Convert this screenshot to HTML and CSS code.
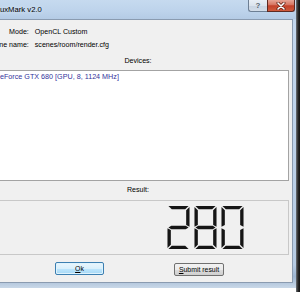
FILE: index.html
```html
<!DOCTYPE html>
<html>
<head>
<meta charset="utf-8">
<title>LuxMark v2.0</title>
<link rel="stylesheet" href="styles.css">
</head>
<body>
<div class="desk">
  <div class="window">
    <div class="titlebar">
      <span class="title">LuxMark v2.0</span>
      <div class="caption">
        <span class="cap help">?</span>
        <span class="cap close">
          <svg width="10" height="8" viewBox="0 0 10 8">
            <path d="M2 1 L8 7 M8 1 L2 7" stroke="#5a1d12" stroke-width="3" stroke-linecap="round"/>
            <path d="M2 1 L8 7 M8 1 L2 7" stroke="#ffffff" stroke-width="1.6" stroke-linecap="round"/>
          </svg>
        </span>
      </div>
    </div>
    <div class="client">
      <div class="form">
        <span class="lbl">Mode:</span><span class="val">OpenCL Custom</span>
        <span class="lbl">Scene name:</span><span class="val">scenes/room/render.cfg</span>
      </div>
      <div class="cap-lbl devices">Devices:</div>
      <div class="list">
        <div class="item">GeForce GTX 680 [GPU, 8, 1124 MHz]</div>
      </div>
      <div class="cap-lbl result">Result:</div>
      <div class="lcd">
        <svg class="digit" viewBox="0 0 24 46" aria-label="2">
          <polygon points="1.5,0.5 22.5,0.5 19,4 5,4"/>
          <polygon points="23.5,1.5 23.5,22.3 20,20.5 20,5"/>
          <polygon points="1.5,23 4.5,21.3 19.5,21.3 22.5,23 19.5,24.7 4.5,24.7"/>
          <polygon points="0.5,23.7 4,25.5 4,41 0.5,44.5"/>
          <polygon points="1.5,45.5 5,42 19,42 22.5,45.5"/>
        </svg>
        <svg class="digit" viewBox="0 0 24 46" aria-label="8">
          <polygon points="1.5,0.5 22.5,0.5 19,4 5,4"/>
          <polygon points="0.5,1.5 4,5 4,20.5 0.5,22.3"/>
          <polygon points="23.5,1.5 23.5,22.3 20,20.5 20,5"/>
          <polygon points="1.5,23 4.5,21.3 19.5,21.3 22.5,23 19.5,24.7 4.5,24.7"/>
          <polygon points="0.5,23.7 4,25.5 4,41 0.5,44.5"/>
          <polygon points="23.5,23.7 23.5,44.5 20,41 20,25.5"/>
          <polygon points="1.5,45.5 5,42 19,42 22.5,45.5"/>
        </svg>
        <svg class="digit" viewBox="0 0 24 46" aria-label="0">
          <polygon points="1.5,0.5 22.5,0.5 19,4 5,4"/>
          <polygon points="0.5,1.5 4,5 4,20.5 0.5,22.3"/>
          <polygon points="23.5,1.5 23.5,22.3 20,20.5 20,5"/>
          <polygon points="0.5,23.7 4,25.5 4,41 0.5,44.5"/>
          <polygon points="23.5,23.7 23.5,44.5 20,41 20,25.5"/>
          <polygon points="1.5,45.5 5,42 19,42 22.5,45.5"/>
        </svg>
      </div>
      <div class="buttons">
        <button class="btn default"><u>O</u>k</button>
        <button class="btn submit"><u>S</u>ubmit result</button>
      </div>
    </div>
  </div>
  <div class="shade"></div>
</div>
</body>
</html>
```

FILE: styles.css
```css
html, body {
  margin: 0;
  padding: 0;
}

body {
  width: 300px;
  height: 300px;
  overflow: hidden;
  background: #ffffff;
  font-family: "Liberation Sans", Arial, sans-serif;
  color: #000;
}

.desk {
  display: flex;
  align-items: flex-start;
}

.window {
  flex: none;
  margin-left: -30px;
  width: 326px;
  height: 288px;
  display: flex;
  flex-direction: column;
  background: linear-gradient(180deg, #bcd2ea 0%, #c3d7ee 10%, #b6cbe3 92%, #9db5d1 96%, #c9d8e8 100%);
}

.shade {
  flex: none;
  width: 4px;
  height: 292px;
  background: linear-gradient(90deg, #6f7378 0%, #2a2a2a 50%, #111 100%);
}

.titlebar {
  flex: none;
  height: 19px;
  display: flex;
  justify-content: space-between;
  align-items: flex-start;
  background: linear-gradient(180deg, #c6daef 0%, #bdd3eb 60%, #b4cbe5 100%);
}

.title {
  padding-left: 25.7px;
  font-size: 7.7px;
  line-height: 19px;
  color: #000;
  text-shadow: 0 0 4px #e6f0fa;
}

.caption {
  display: flex;
  margin-right: 1px;
}

.cap {
  height: 12px;
  box-sizing: border-box;
  display: flex;
  align-items: center;
  justify-content: center;
  border: 1px solid #6d7f94;
  border-top: none;
}

.help {
  width: 19px;
  border-right: none;
  border-radius: 0 0 0 3px;
  background: linear-gradient(180deg, #e9eff6 0%, #dbe4ee 50%, #c8d4e2 51%, #d3dde9 100%);
  color: #56626f;
  font-size: 8px;
  font-weight: bold;
  line-height: 11px;
}

.close {
  width: 28px;
  border-color: #5e2a22;
  border-radius: 0 0 3px 0;
  background: linear-gradient(180deg, #e6a596 0%, #d6735f 45%, #c2412a 52%, #cf5a3c 100%);
}

.client {
  flex: 1;
  margin: 0 3px 5px 5px;
  background: #f0f0f0;
  border: 1px solid #8a9bb0;
  padding: 6px 3px 0 11px;
  display: flex;
  flex-direction: column;
}

.form {
  display: grid;
  grid-template-columns: auto 1fr;
  column-gap: 6px;
  row-gap: 1px;
  font-size: 7.1px;
  line-height: 12px;
}

.lbl {
  text-align: right;
  white-space: nowrap;
}

.val {
  white-space: nowrap;
}

.cap-lbl {
  text-align: center;
  font-size: 7.1px;
  line-height: 12px;
}

.devices {
  margin-top: 4px;
}

.list {
  margin-top: 3px;
  height: 111px;
  box-sizing: border-box;
  border: 1px solid #a3a3a3;
  background: #ffffff;
  padding: 0 0 0 6.4px;
}

.item {
  font-size: 7.2px;
  line-height: 12px;
  color: #33339c;
  white-space: nowrap;
}

.result {
  margin-top: 3px;
}

.lcd {
  margin-top: 4px;
  height: 55px;
  box-sizing: border-box;
  border: 1px solid #c8c8c8;
  padding: 4px 44px 0 0;
  display: flex;
  justify-content: flex-end;
  align-items: flex-start;
  gap: 4px;
}

.digit {
  width: 23px;
  height: 45px;
  fill: #151515;
}

.buttons {
  margin-top: 7px;
  display: flex;
  align-items: flex-start;
  padding-left: 68px;
  gap: 70px;
}

.btn {
  height: 13px;
  box-sizing: border-box;
  padding: 0;
  margin: 0;
  font-family: "Liberation Sans", Arial, sans-serif;
  font-size: 6.9px;
  line-height: 11px;
  color: #000;
  border: 1px solid #707070;
  border-radius: 2px;
  background: linear-gradient(180deg, #f2f2f2 0%, #ebebeb 50%, #dddddd 51%, #cfcfcf 100%);
}

.default {
  width: 49px;
  border-color: #3c7fb1;
  background: linear-gradient(180deg, #eaf6fd 0%, #d9f0fc 50%, #bee6fd 51%, #a7d9f5 100%);
  box-shadow: inset 0 0 0 1px #dff3fd;
}

.submit {
  width: 50px;
  margin-top: 1px;
}
```
